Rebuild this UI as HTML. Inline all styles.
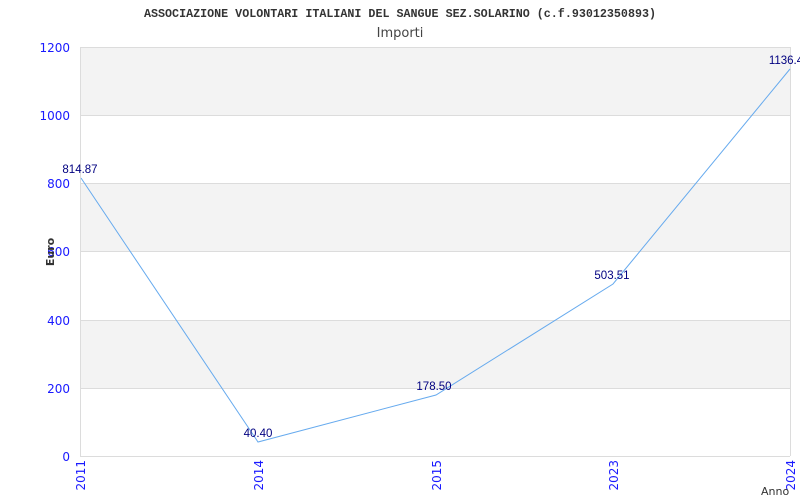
<!DOCTYPE html>
<html><head><style>
body{margin:0;width:800px;height:500px;background:#fff;overflow:hidden;position:relative;font-family:"DejaVu Sans","Liberation Sans",sans-serif}
</style></head><body>
<svg width="800" height="500" style="position:absolute;left:0;top:0">
<rect x="80" y="47" width="710" height="68" fill="#f3f3f3"/>
<rect x="80" y="183" width="710" height="68" fill="#f3f3f3"/>
<rect x="80" y="320" width="710" height="68" fill="#f3f3f3"/>
<g stroke="#dcdcdc" stroke-width="1">
<line x1="80" y1="47.5" x2="790" y2="47.5"/>
<line x1="80" y1="115.5" x2="790" y2="115.5"/>
<line x1="80" y1="183.5" x2="790" y2="183.5"/>
<line x1="80" y1="251.5" x2="790" y2="251.5"/>
<line x1="80" y1="320.5" x2="790" y2="320.5"/>
<line x1="80" y1="388.5" x2="790" y2="388.5"/>
<line x1="80" y1="456.5" x2="790" y2="456.5"/>
<line x1="80.5" y1="47" x2="80.5" y2="456"/>
<line x1="790.5" y1="47" x2="790.5" y2="456"/>
</g>
<polyline points="81,178 258,442 436,395 613,284 790,69" fill="none" stroke="#66aaee" stroke-width="1"/>
<text x="400" y="17" text-anchor="middle" font-family="Liberation Mono,monospace" font-weight="bold" font-size="11.7" fill="#333">ASSOCIAZIONE VOLONTARI ITALIANI DEL SANGUE SEZ.SOLARINO (c.f.93012350893)</text>
<text x="400" y="37" text-anchor="middle" font-size="13" fill="#444">Importi</text>
<g font-size="12" fill="#1a1aff" text-anchor="end">
<text x="70" y="52">1200</text><text x="70" y="120">1000</text><text x="70" y="188">800</text>
<text x="70" y="256">600</text><text x="70" y="325">400</text><text x="70" y="393">200</text><text x="70" y="461">0</text>
</g>
<g font-size="11.5" fill="#000080" font-family="Liberation Sans,sans-serif" text-anchor="middle">
<text x="80" y="173">814.87</text><text x="258" y="437">40.40</text><text x="434" y="390">178.50</text>
<text x="612" y="279">503.51</text><text x="786" y="64">1136.4</text>
</g>
<text transform="translate(54,252) rotate(-90)" text-anchor="middle" font-size="11" font-weight="bold" fill="#333">Euro</text>
<g font-size="12" fill="#1a1aff" text-anchor="end">
<text transform="translate(85,460) rotate(-90)">2011</text>
<text transform="translate(263,460) rotate(-90)">2014</text>
<text transform="translate(441,460) rotate(-90)">2015</text>
<text transform="translate(618,460) rotate(-90)">2023</text>
<text transform="translate(795,460) rotate(-90)">2024</text>
</g>
<text x="761" y="495" font-size="11" fill="#333">Anno</text>
</svg>
</body></html>
